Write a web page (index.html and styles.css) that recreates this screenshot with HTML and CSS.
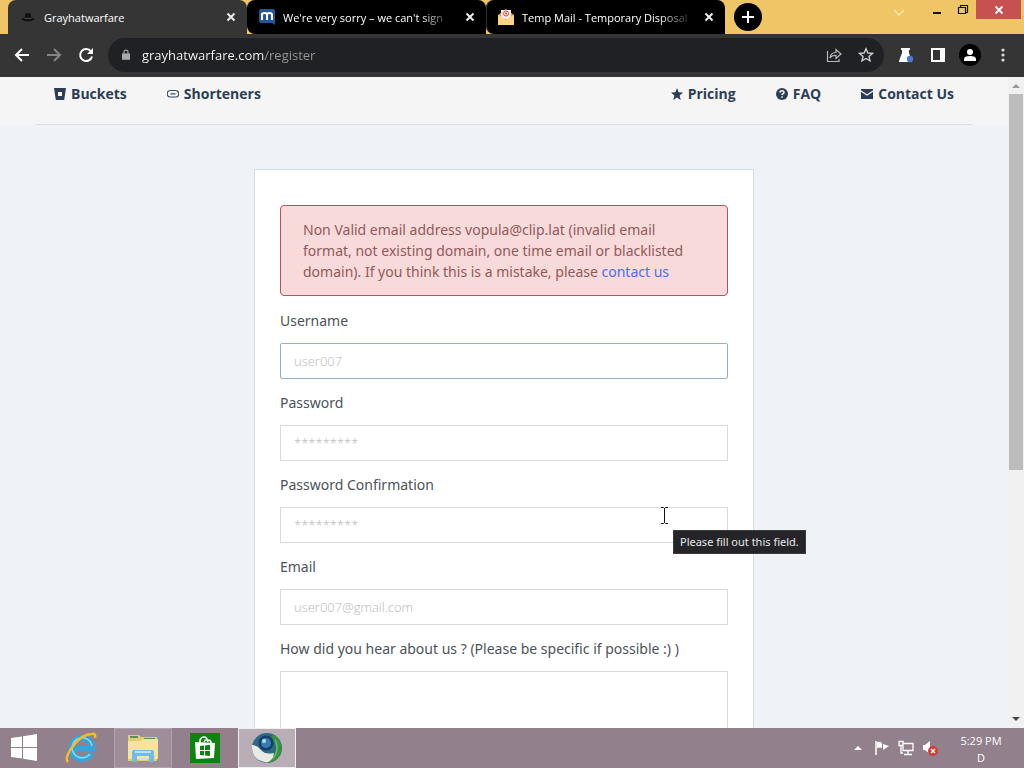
FILE: index.html
```html
<!DOCTYPE html>
<html lang="en">
<head>
    <meta charset="utf-8">
    <title>Grayhatwarfare</title>
    <link rel="stylesheet" href="styles.css">
</head>
<body>
    <!-- Browser tabs -->
    <div class="tab-strip">
        <div class="tab active">
            <svg class="favicon" width="16" height="16" viewBox="0 0 16 16"><path d="M4.500 9 5.500 4.500q1-1 2.500 0 1.500-1 2.500 0l1 4.500 3 .5q-1 3-6.500 3t-6.500-3z" fill="#111"/><path d="M4.500 9.300h7" stroke="#555"/></svg>
            <button class="tab-title">Grayhatwarfare</button>
            <button class="tab-close" aria-label="Close tab"><svg width="10" height="10" viewBox="0 0 10 10"><path d="M1.500 1.500l7 7M8.500 1.500l-7 7"/></svg></button>
        </div>
        <div class="tab">
            <svg class="favicon" width="16" height="16" viewBox="0 0 16 16"><path d="M2 0h12q2 0 2 2v14l-3-2H2q-2 0-2-2V2q0-2 2-2z" fill="#2455a0"/><path d="M3 11V4M3 6q0-2 2.500-2T8 6v5M8 6q0-2 2.500-2T13 6v5" fill="none" stroke="#fff" stroke-width="2"/></svg>
            <button class="tab-title faded">We're very sorry – we can't sign</button>
            <button class="tab-close" aria-label="Close tab"><svg width="10" height="10" viewBox="0 0 10 10"><path d="M1.500 1.500l7 7M8.500 1.500l-7 7"/></svg></button>
        </div>
        <div class="tab divided">
            <svg class="favicon" width="16" height="16" viewBox="0 0 16 16"><path d="M0 6l8-6 8 6v10H0z" fill="#e9a63c"/><path d="M3 1h10v9H3z" fill="#f7e8e4"/><circle cx="8" cy="4.500" r="2.500" fill="none" stroke="#cf5349"/><circle cx="8" cy="4.500" r="1" fill="#cf5349"/><path d="M0 6l8 5 8-5v9q0 1-1 1H1q-1 0-1-1z" fill="#fbd583"/></svg>
            <button class="tab-title faded">Temp Mail - Temporary Disposal</button>
            <button class="tab-close" aria-label="Close tab"><svg width="10" height="10" viewBox="0 0 10 10"><path d="M1.500 1.500l7 7M8.500 1.500l-7 7"/></svg></button>
        </div>
        <button class="new-tab" aria-label="New tab"><svg width="12" height="12" viewBox="0 0 12 12"><path d="M6 0v12M0 6h12" stroke="#fff" stroke-width="2"/></svg></button>
        <div class="window-buttons">
            <button class="tab-search" aria-label="Search tabs"><svg width="12" height="8" viewBox="0 0 12 8"><path d="M1 1l5 5 5-5" fill="none" stroke="#fbe6a8" stroke-width="1.500"/></svg></button>
            <button class="win-min" aria-label="Minimize"><svg width="10" height="10" viewBox="0 0 10 10"><path d="M1 8h8" stroke="#111" stroke-width="2"/></svg></button>
            <button class="win-max" aria-label="Restore"><svg width="12" height="12" viewBox="0 0 12 12"><path d="M1.500 3.500h7v6h-7zM3.500 3V1.500h7v7H9" fill="none" stroke="#111" stroke-width="1.200"/></svg></button>
            <button class="win-close" aria-label="Close"><svg width="10" height="10" viewBox="0 0 10 10"><path d="M1.500 1.500l7 7M8.500 1.500l-7 7" stroke="#fff" stroke-width="1.800"/></svg></button>
        </div>
    </div>

    <!-- Address bar -->
    <div class="toolbar">
        <button class="tool" aria-label="Back"><svg width="16" height="16" viewBox="0 0 16 16"><path d="M15 8H2M8 2L2 8l6 6" fill="none" stroke="#fff" stroke-width="2"/></svg></button>
        <button class="tool" aria-label="Forward"><svg width="16" height="16" viewBox="0 0 16 16"><path d="M1 8h13M8 2l6 6-6 6" fill="none" stroke="#858585" stroke-width="2"/></svg></button>
        <button class="tool" aria-label="Reload"><svg width="16" height="16" viewBox="0 0 16 16"><path d="M13 4.500A6 6 0 1 0 14 9.500" fill="none" stroke="#fff" stroke-width="2"/><path d="M15 1v6H9z" fill="#fff"/></svg></button>
        <div class="address">
            <svg width="8" height="12" viewBox="0 0 10 14"><path d="M0 5h10v8H0z" fill="#aaa"/><path d="M2.500 5.500V3.500a2.500 2.500 0 0 1 5 0v2" fill="none" stroke="#aaa" stroke-width="1.500"/></svg>
            <input class="url" type="text" aria-label="Address" value="grayhatwarfare.com/register">
            <button class="tool" aria-label="Share"><svg width="16" height="16" viewBox="0 0 16 16"><path d="M1.500 4v10.500H13V12M4 11q.5-5.500 6-5.500V2.500L15 7l-5 4.500v-3Q6 8 4 11z" fill="none" stroke="#bbb" stroke-width="1.200"/></svg></button>
            <button class="tool" aria-label="Bookmark"><svg width="16" height="16" viewBox="0 0 16 16"><path d="M8 1.800l1.900 4.200 4.500.4-3.400 3 1 4.500L8 11.500l-4 2.400 1-4.500-3.400-3L6.100 6z" fill="none" stroke="#ccc" stroke-width="1.400"/></svg></button>
        </div>
        <button class="tool" aria-label="Labs"><svg width="16" height="16" viewBox="0 0 16 16"><path d="M3 1h9v2h-1v3l3 8v1H1v-1l3-8V3H3z" fill="#fff"/><circle cx="12" cy="12" r="3.200" fill="#4a78d0"/></svg></button>
        <button class="tool" aria-label="Side panel"><svg width="14" height="14" viewBox="0 0 14 14"><path d="M0 0h14v14H0z" fill="#fff"/><path d="M2 2h7v10H2z" fill="#333"/></svg></button>
        <button class="tool" aria-label="Profile"><svg width="22" height="22" viewBox="0 0 22 22"><circle cx="11" cy="11" r="11" fill="#000"/><circle cx="11" cy="8" r="3" fill="#fff"/><path d="M5 17v-2q0-3 6-3t6 3v2z" fill="#fff"/></svg></button>
        <button class="tool" aria-label="Menu"><svg width="4" height="16" viewBox="0 0 4 16"><g fill="#ddd"><circle cx="2" cy="3" r="1.600"/><circle cx="2" cy="8" r="1.600"/><circle cx="2" cy="13" r="1.600"/></g></svg></button>
    </div>

    <!-- Website -->
    <div class="viewport">
        <div class="site">
            <header class="site-header">
                <nav class="site-nav">
                    <a href="#"><svg width="12" height="12" viewBox="0 0 12 12"><path fill-rule="evenodd" d="M0 0h12l-1.800 12H1.800zM4 4v4h4V4z" fill="#2c3e55"/></svg>Buckets</a>
                    <a href="#"><svg width="12" height="12" viewBox="0 0 12 12"><path d="M5 2.500H3.500a3 3 0 0 0 0 6.500H8.500a3 3 0 0 0 0-6.500H7M3.500 5.800h5M5 2.500h2" fill="none" stroke="#3d4c5e" stroke-width="1.200"/></svg>Shorteners</a>
                    <a href="#" class="push"><svg width="12" height="12" viewBox="0 0 12 12"><path d="M6 0l1.600 4.200 4.400.3-3.400 2.900L9.700 12 6 9.400 2.300 12l1.100-4.600L0 4.500l4.400-.3z" fill="#2c3e55"/></svg>Pricing</a>
                    <a href="#"><svg width="12" height="12" viewBox="0 0 12 12"><circle cx="6" cy="6" r="6" fill="#2c3e55"/><path d="M3.900 4.600Q4 2.700 6 2.700t2 1.800Q8 5.500 6 6.500V7M6 8.300v1.500" fill="none" stroke="#f5f5f5" stroke-width="1.500"/></svg>FAQ</a>
                    <a href="#"><svg width="12" height="12" viewBox="0 0 12 12"><path d="M0 1h12v10H0z" fill="#2c3e55"/><path d="M0 3l6 4 6-4" fill="none" stroke="#f5f5f5" stroke-width="1.200"/></svg>Contact Us</a>
                </nav>
            </header>
            <main>
                <form class="card">
                    <div class="alert">Non Valid email address vopula@clip.lat (invalid email format, not existing domain, one time email or blacklisted domain). If you think this is a mistake, please <a href="#">contact us</a></div>
                    <div class="form-group">
                        <label for="username">Username</label>
                        <input class="form-control focused" type="text" id="username" placeholder="user007">
                    </div>
                    <div class="form-group">
                        <label for="password">Password</label>
                        <input class="form-control" type="password" id="password" placeholder="*********">
                    </div>
                    <div class="form-group hovered">
                        <label for="confirm">Password Confirmation</label>
                        <input class="form-control" type="password" id="confirm" placeholder="*********">
                        <svg class="cursor" width="9" height="17" viewBox="0 0 9 17"><path d="M1 .5h2.500l1 1 1-1H8M4.500 1v15M1 16.500h2.500l1-1 1 1H8" fill="none" stroke="#111"/></svg>
                        <div class="tooltip" role="tooltip">Please fill out this field.</div>
                    </div>
                    <div class="form-group">
                        <label for="email">Email</label>
                        <input class="form-control" type="email" id="email" placeholder="user007@gmail.com">
                    </div>
                    <div class="form-group">
                        <label for="source">How did you hear about us ? (Please be specific if possible :) )</label>
                        <textarea class="form-control" id="source" rows="5"></textarea>
                    </div>
                </form>
            </main>
        </div>
        <div class="scrollbar">
            <svg width="8" height="4" viewBox="0 0 8 4"><path d="M0 4l4-4 4 4z" fill="#9a9a9a"/></svg>
            <div class="scroll-track"><div class="scroll-thumb"></div></div>
            <svg width="8" height="4" viewBox="0 0 8 4"><path d="M0 0l4 4 4-4z" fill="#444"/></svg>
        </div>
    </div>

    <!-- Taskbar -->
    <footer class="taskbar">
        <button class="task start" aria-label="Start"><svg width="28" height="28" viewBox="0 0 28 28"><path d="M1 4l11-1.500V13H1zM13 2.300L27 0v13H13zM1 14h11v10.500L1 23zM13 14h14v13l-14-2.300z" fill="#fff"/></svg></button>
        <button class="task" aria-label="Internet Explorer"><svg width="32" height="32" viewBox="0 0 32 32"><path d="M26.500 21A10.500 10.500 0 1 1 27.500 16.500H10" fill="none" stroke="#35a5dc" stroke-width="6"/><path d="M25 22A10 10 0 1 1 27 14" fill="none" stroke="#8bdaf6" stroke-width="1.500"/><path d="M3 30Q-1 26 8 14T27 2q4-1 3 4" fill="none" stroke="#f2bd28" stroke-width="2.500"/></svg></button>
        <button class="task open" aria-label="File Explorer"><svg width="32" height="32" viewBox="0 0 32 32"><path d="M1 3h11l2 2h16v24H1z" fill="#e6cb70"/><path d="M3 5h8M17 7h11" stroke="#57905a" stroke-width="2"/><path d="M1 9h13l2-2h15v20H1z" fill="#f6e39c"/><path d="M5 30V20q0-2 2-2h18q2 0 2 2v10h-5v-6H10v6z" fill="#70bce8"/><path d="M8 20h16M12 27h8" stroke="#b9e7fa" stroke-width="2"/></svg></button>
        <button class="task" aria-label="Store"><svg width="30" height="30" viewBox="0 0 30 30"><path d="M0 0h30v30H0z" fill="#0d8410"/><path d="M5 9l20 1-1 15-18 1z" fill="#fff"/><path d="M10 10V7q1-3 4-3t4 5M14 9q1-3 4-2 3 0 3 3" fill="none" stroke="#fff" stroke-width="1.500"/><path d="M10 13l4-.5V17h-4zM15 12.400l5-.6V17h-5zM10 18h4v4.500l-4-.5zM15 18h5v5l-5-.5z" fill="#0d8410"/></svg></button>
        <button class="task current" aria-label="Browser"><svg width="32" height="32" viewBox="0 0 32 32"><circle cx="16" cy="16" r="15" fill="#2b6a80"/><path d="M22 2.500A15 15 0 0 1 16 31q9-6 9-14T20 5z" fill="#35943b"/><path d="M24 8q5 8-2 19" fill="none" stroke="#69bd62" stroke-width="1.500"/><path d="M1 13q5 0 9 5t13 3q-1 8-7 9.500Q0 29 1 13z" fill="#e9eae1"/><circle cx="15" cy="11" r="7.500" fill="#173d68"/><circle cx="15" cy="11" r="5" fill="#397bb5"/><circle cx="13" cy="9" r="2" fill="#b5dcef"/></svg></button>
        <div class="tray">
            <svg width="8" height="4" viewBox="0 0 8 4"><path d="M0 4l4-4 4 4z" fill="#fff"/></svg>
            <svg width="16" height="16" viewBox="0 0 16 16"><path d="M2 1v14" stroke="#fff" stroke-width="1.500"/><path d="M3 2q3-1 5 1v5Q6 7 3 8zM9 4l6 2-6 4z" fill="#fff"/></svg>
            <svg width="16" height="16" viewBox="0 0 16 16"><path d="M5 3.500h10v7H5zM10 11v3M6 14.500h8M1 1.500h4v4H1zM3 6v7h2" fill="none" stroke="#fff" stroke-width="1.300"/></svg>
            <svg width="16" height="16" viewBox="0 0 16 16"><path d="M1 5h2l5-4v13l-5-4H1z" fill="#fff"/><circle cx="11" cy="11" r="5" fill="#d83a34"/><path d="M9 9l4 4M13 9l-4 4" stroke="#fff" stroke-width="1.500"/></svg>
        </div>
        <div class="clock"><span>5:29 PM</span><span>D</span></div>
    </footer>
</body>
</html>
```
FILE: styles.css
```css
* {
    box-sizing: border-box;
}
body {
    margin: 0;
    height: 100vh;
    display: flex;
    flex-direction: column;
    overflow: hidden;
    font-family: "Open Sans", "Noto Sans", sans-serif;
}
button {
    display: flex;
    align-items: center;
    justify-content: center;
    padding: 0;
    border: none;
    background: none;
    font-family: inherit;
}
svg {
    flex: none;
}

/* Tabs */
.tab-strip {
    display: flex;
    align-items: center;
    height: 34px;
    padding: 0 3px 0 8px;
    background: #efc566;
}
.tab {
    display: flex;
    align-items: center;
    flex: 0 1 239px;
    min-width: 0;
    height: 34px;
    padding: 0 8px 0 12px;
    background: #000;
    border-radius: 8px 8px 0 8px;
}
.tab.active {
    background: #353535;
    border-radius: 8px 8px 0 0;
}
.tab.divided {
    box-shadow: inset 1px 0 #333;
}
.tab-title {
    flex: 1;
    min-width: 0;
    margin: 0 8px;
    overflow: hidden;
    justify-content: flex-start;
    color: #fff;
    font-size: 11px;
    white-space: nowrap;
}
.tab-title.faded {
    -webkit-mask-image: linear-gradient(to right, #000 80%, transparent);
    mask-image: linear-gradient(to right, #000 80%, transparent);
}
.tab-close {
    width: 16px;
    height: 16px;
}
.tab-close path {
    stroke: #eee;
    stroke-width: 2;
}
.new-tab {
    width: 28px;
    height: 28px;
    margin-left: 9px;
    border-radius: 50%;
    background: #000;
}
.window-buttons {
    display: flex;
    align-self: flex-start;
    margin-left: auto;
}
.window-buttons button {
    width: 26px;
    height: 19px;
}
.window-buttons .tab-search {
    height: 26px;
    margin-right: 12px;
}
.window-buttons .win-close {
    width: 45px;
    background: #c75050;
}

/* Address bar */
.toolbar {
    display: flex;
    align-items: center;
    height: 43px;
    padding: 0 4px 1px 6px;
    background: #353535;
}
.tool {
    width: 32px;
    height: 32px;
    flex: none;
}
.toolbar > .tool:last-child {
    width: 34px;
}
.address {
    display: flex;
    align-items: center;
    flex: 1;
    height: 34px;
    margin: 0 6px;
    padding: 0 2px 0 14px;
    border-radius: 17px;
    background: #202124;
}
.url {
    flex: 1;
    min-width: 0;
    margin-left: 12px;
    padding: 0;
    border: none;
    outline: none;
    font-family: inherit;
    font-size: 13px;
    color: transparent;
    /* host in white, path in grey */
    background: linear-gradient(to right, #fff 122px, #999 122px);
    -webkit-background-clip: text;
    background-clip: text;
}

/* Website */
.viewport {
    display: flex;
    flex: 1;
    min-height: 0;
}
.site {
    flex: 1;
    overflow: hidden;
    background: #eff3f8;
    color: #4b5358;
    font-family: "Noto Sans", "Open Sans", sans-serif;
    font-size: 14px;
    line-height: 21px;
}
.site-header {
    padding: 0 36px;
    background: #f5f5f5;
}
.site-nav {
    display: flex;
    gap: 40px;
    height: 48px;
    padding: 6px 18px 0;
    border-bottom: 1px solid #dcdfe1;
    font-family: "Open Sans", sans-serif;
}
.site-nav a {
    display: flex;
    align-items: center;
    gap: 5px;
    height: 21px;
    color: #2c3e55;
    font-weight: 700;
    text-decoration: none;
}
.site-nav .push {
    margin-left: auto;
}
.card {
    max-width: 500px;
    margin: 44px auto;
    padding: 35px 25px;
    border: 1px solid #d5dde4;
    background: #fff;
}
.alert {
    margin-bottom: 14px;
    padding: 13px 22px;
    border: 1px solid #b05560;
    border-radius: 4px;
    background: #f9dada;
    color: #91595c;
}
.alert a {
    color: #4b70e8;
    text-decoration: none;
}
.form-group {
    margin-bottom: 13px;
}
.form-group label {
    display: block;
    margin-bottom: 12px;
}
.form-control {
    display: block;
    width: 100%;
    height: 36px;
    padding: 0 13px;
    border: 1px solid #d6dcde;
    border-radius: 0;
    outline: none;
    background: #fff;
    font-family: "Open Sans", sans-serif;
    font-size: 13px;
}
.form-control::placeholder {
    color: #b8b8b8;
    font-weight: 300;
}
.form-control.focused {
    border-color: #8fb4c0;
    border-radius: 2px;
}
textarea.form-control {
    height: 110px;
    resize: none;
}
.hovered {
    position: relative;
}
.cursor {
    position: absolute;
    right: 59px;
    top: 33px;
}
.tooltip {
    position: absolute;
    left: 393px;
    top: 56px;
    z-index: 1;
    padding: 2px 6px;
    border: 1px solid #3a3a3d;
    background: #252529;
    color: #e8e8e8;
    font-size: 11px;
    line-height: 18px;
    white-space: nowrap;
}

/* Scrollbar */
.scrollbar {
    display: flex;
    flex-direction: column;
    align-items: center;
    width: 16px;
    padding: 7px 1px;
    background: #f1f1f1;
}
.scroll-track {
    flex: 1;
    width: 100%;
    padding: 6px 0;
}
.scroll-thumb {
    height: 61%;
    background: #bcbcbc;
}

/* Taskbar */
.taskbar {
    display: flex;
    height: 40px;
    background: #93808d;
}
.task {
    width: 58px;
    height: 40px;
    margin-right: 4px;
}
.task.start {
    width: 48px;
}
.task.open {
    border: 1px solid #b1a3ad;
    background: #9f8e9a;
}
.task.current {
    border: 1px solid #f1eef0;
    background: #b9adb6;
}
.tray {
    display: flex;
    align-items: center;
    gap: 8px;
    margin-left: auto;
}
.tray svg:first-child {
    margin-right: 4px;
}
.clock {
    display: flex;
    flex-direction: column;
    align-items: center;
    width: 86px;
    padding-top: 4px;
    color: #fff;
    font-size: 11px;
    line-height: 17px;
}
```
